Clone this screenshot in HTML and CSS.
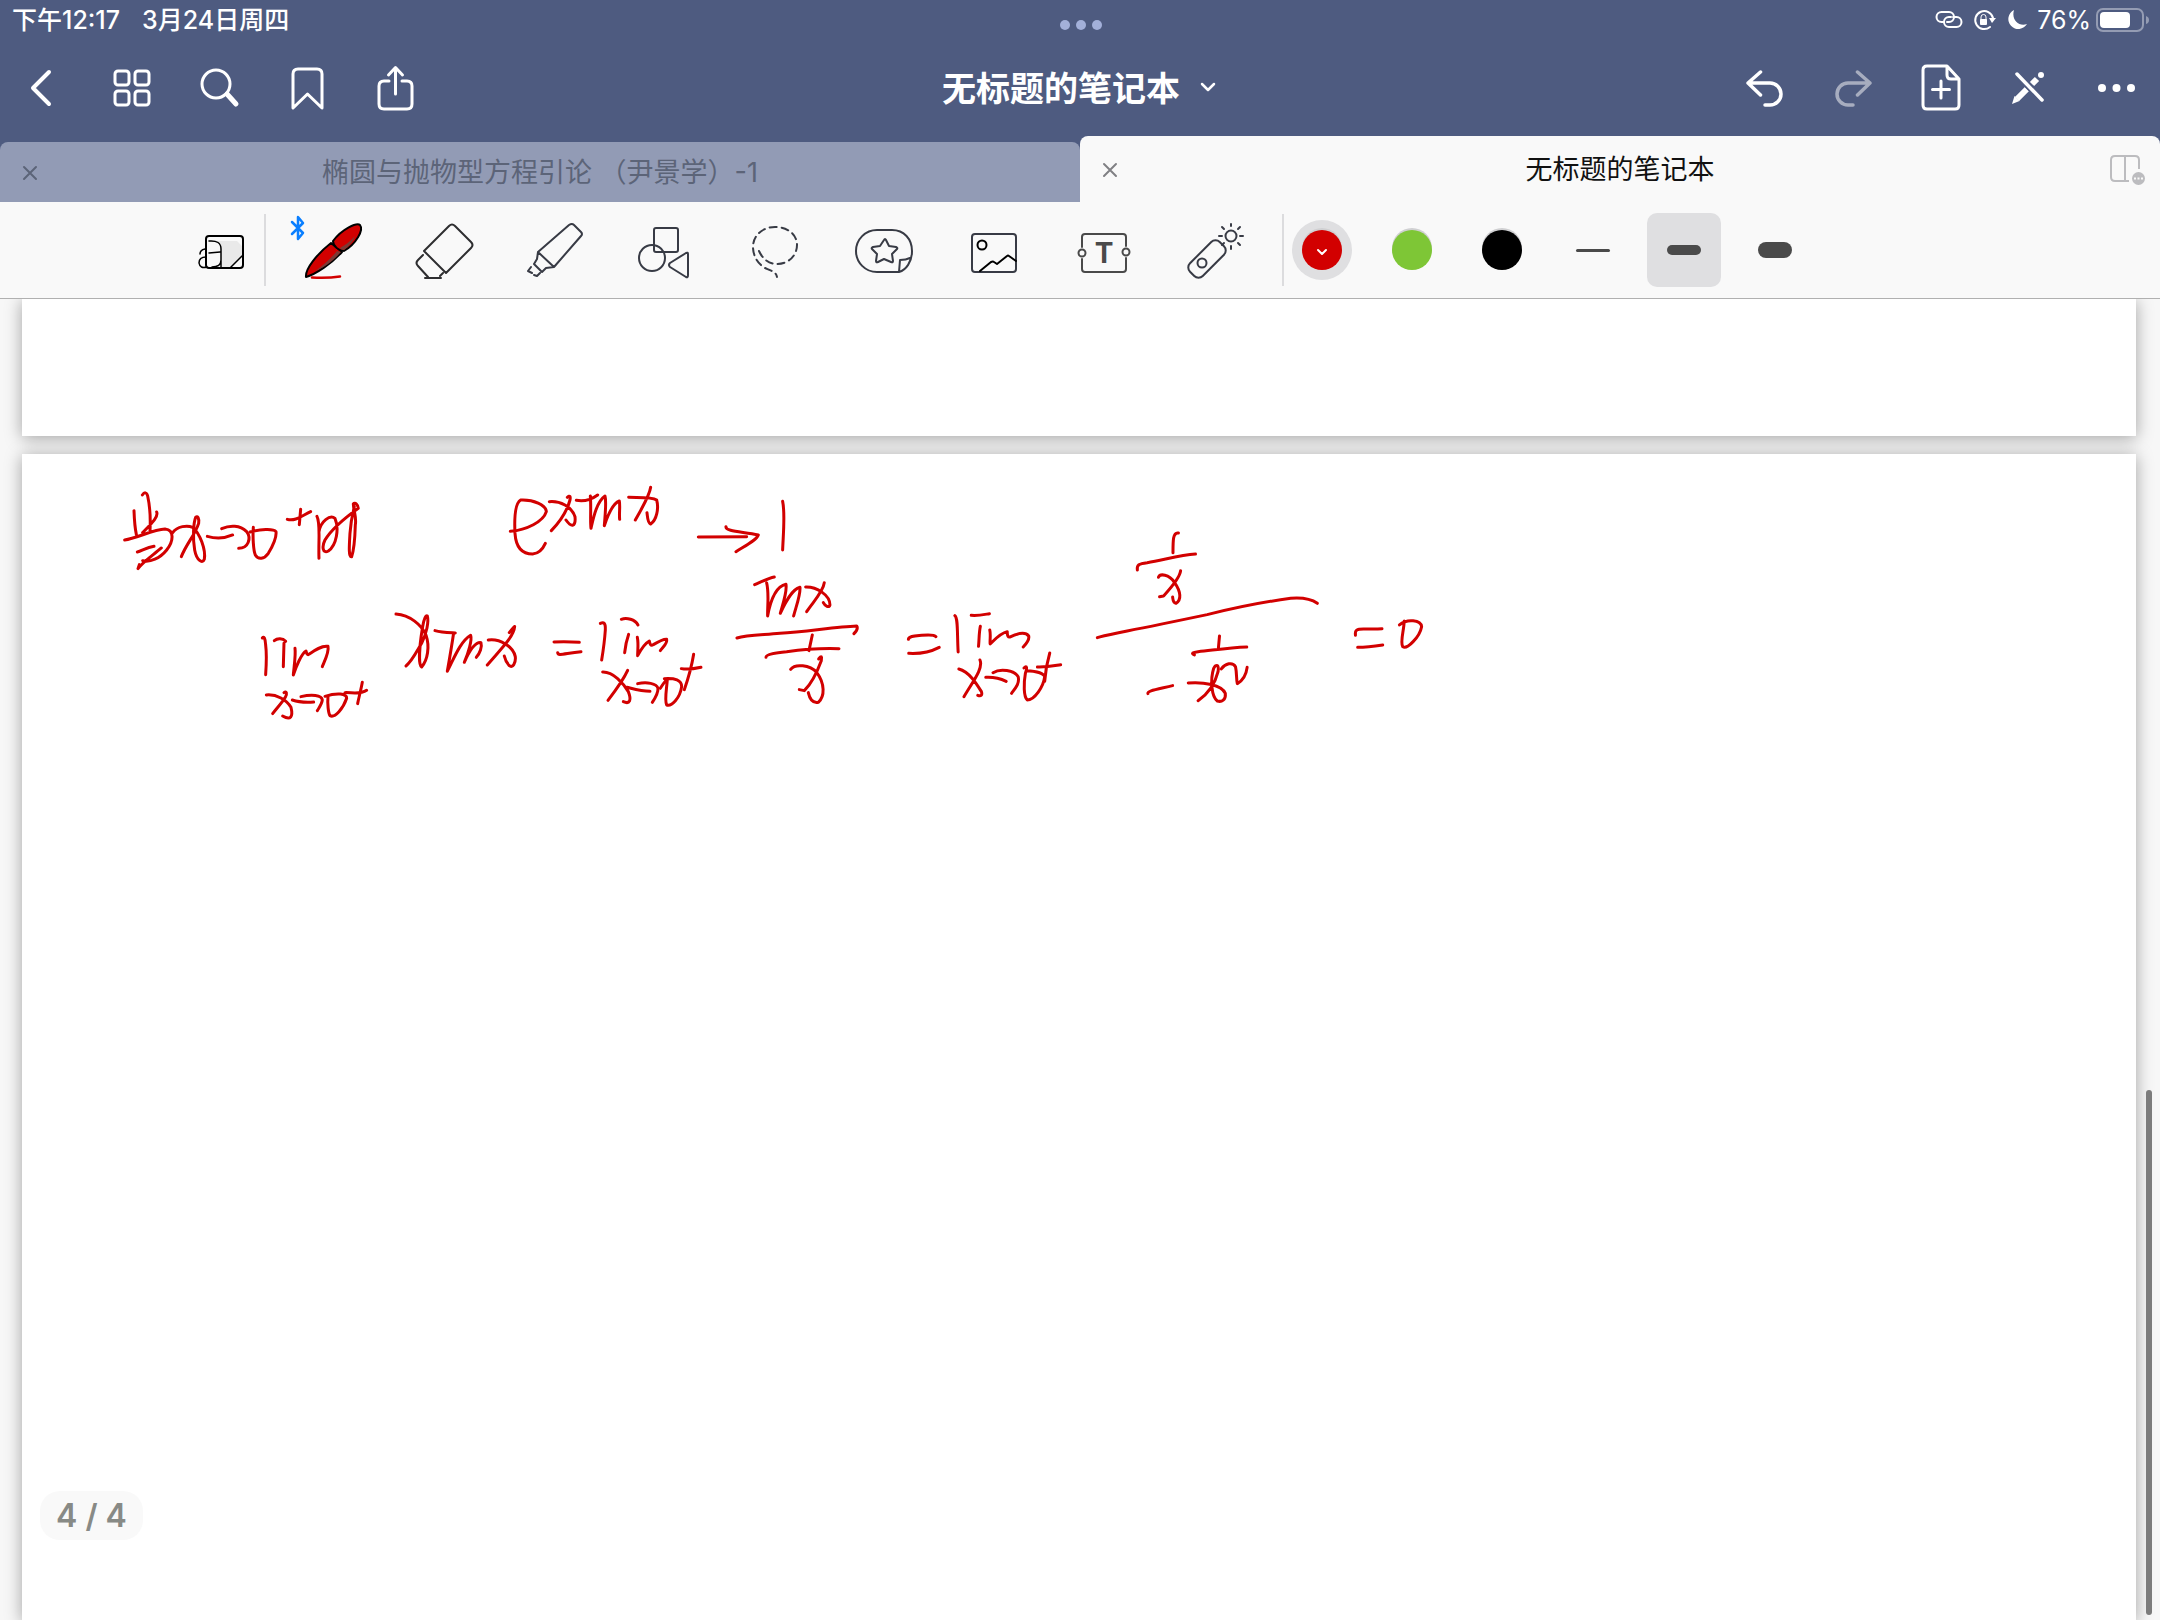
FILE: index.html
```html
<!DOCTYPE html>
<html lang="zh-CN">
<head>
    <meta charset="UTF-8">
    <meta name="viewport" content="width=device-width, initial-scale=1.0">
    <title>无标题的笔记本</title>
    <link rel="stylesheet" href="styles.css">
</head>
<body>
    <header class="header">
        <div class="status">
            <div class="status-left">
                <span>下午12:17</span>
                <span>3月24日周四</span>
            </div>
            <div class="multitask"><i></i><i></i><i></i></div>
            <div class="status-right">
                <svg class="line" width="28" height="24" viewBox="0 0 28 24">
                    <path d="M9 14H6.500a5 5 0 0 1 0-10H14a5 5 0 0 1 0 10h-2M18 9h3.500a5 5 0 0 1 0 10H14a5 5 0 0 1 0-10h2" stroke-width="2"/>
                </svg>
                <svg class="line" width="24" height="24" viewBox="0 0 24 24">
                    <path d="M17 19a9 9 0 1 1 3-9" stroke-width="2"/>
                    <path d="M16 10h7l-4 5z" fill="#fff" stroke="none"/>
                    <rect x="7" y="11" width="7" height="6" rx="1" fill="#fff" stroke="none"/>
                    <path d="M8 12V9a2 2 0 0 1 5 0v3" stroke-width="1"/>
                </svg>
                <svg width="20" height="24" viewBox="0 0 20 24">
                    <path d="M7 2a10 10 0 1 0 13 14C12 19 4 12 7 2z" fill="#fff"/>
                </svg>
                <span class="percent">76%</span>
                <svg width="54" height="24" viewBox="0 0 54 24">
                    <rect x="1" y="1" width="46" height="22" rx="6" fill="none" stroke="#949cb3" stroke-width="2"/>
                    <rect x="4" y="4" width="30" height="16" rx="4" fill="#fff"/>
                    <path d="M50 8q3 1 3 4t-3 4z" fill="#949cb3"/>
                </svg>
            </div>
        </div>

        <nav class="nav">
            <div class="nav-left">
                <button aria-label="返回"><svg class="line" viewBox="0 0 48 48"><path d="M32 8 16 24l16 16" stroke-width="4"/></svg></button>
                <button aria-label="缩略图">
                    <svg class="line" viewBox="0 0 48 48">
                        <rect x="9" y="7" width="14" height="14" rx="3"/><rect x="29" y="7" width="14" height="14" rx="3"/>
                        <rect x="9" y="27" width="14" height="14" rx="3"/><rect x="29" y="27" width="14" height="14" rx="3"/>
                    </svg>
                </button>
                <button aria-label="搜索">
                    <svg class="line" viewBox="0 0 48 48"><circle cx="21" cy="20" r="14"/><path d="m32 30 9 10" stroke-width="5"/></svg>
                </button>
                <button aria-label="书签">
                    <svg class="line" viewBox="0 0 48 48"><path d="M9 44V10q0-5 5-5h19q5 0 5 5v34L23.500 30z"/></svg>
                </button>
                <button aria-label="分享">
                    <svg class="line" viewBox="0 0 48 48"><path d="M16 17h-5q-5 0-5 5v18q0 5 5 5h23q5 0 5-5V22q0-5-5-5h-5M22.500 30V4M15.500 11l7-7.500 7 7.500"/></svg>
                </button>
            </div>
            <button class="title">无标题的笔记本
                <svg class="line" viewBox="0 0 16 16"><path d="m2 6 6 6 6-6" stroke-width="2.500"/></svg>
            </button>
            <div class="nav-right">
                <button aria-label="撤销"><svg class="line" viewBox="0 0 48 48"><path d="M19.500 8 7 19l12.500 12M7 19h22a11 11 0 0 1 0 22h-5" stroke-width="3.500"/></svg></button>
                <button aria-label="重做" disabled><svg class="line" viewBox="0 0 48 48"><path d="M28.500 8 41 19 28.500 31M41 19H19a11 11 0 0 0 0 22h5" stroke-width="3.500"/></svg></button>
                <button aria-label="添加页面">
                    <svg class="line" viewBox="0 0 48 48"><path d="M10 2h20l12 13v26q0 4-4 4H10q-4 0-4-4V6q0-4 4-4zM30 2v9q0 4 4 4h8M24 17v17M15.500 25.500h17"/></svg>
                </button>
                <button aria-label="只读模式">
                    <svg class="line" viewBox="0 0 48 48">
                        <path d="m12 35 10-10M27 20l5-5" stroke-width="6" stroke-linecap="butt"/>
                        <path d="M36 11h0" stroke-width="6"/>
                        <path d="m7 40 2.500-8 5 5z" fill="#fff" stroke="none"/>
                        <path d="m12 10 25 26" stroke="#4e5b80" stroke-width="7"/>
                        <path d="m12 10 25 26" stroke-width="3.500"/>
                    </svg>
                </button>
                <button aria-label="更多"><svg viewBox="0 0 48 48" fill="#fff"><circle cx="9" cy="24" r="4"/><circle cx="23.500" cy="24" r="4"/><circle cx="38" cy="24" r="4"/></svg></button>
            </div>
        </nav>

        <div class="tabs">
            <div class="tab">
                <button class="close" aria-label="关闭"><svg viewBox="0 0 16 16"><path d="m2 2 12 12M14 2 2 14"/></svg></button>
                <span>椭圆与抛物型方程引论 （尹景学）-1</span>
            </div>
            <div class="tab active">
                <button class="close" aria-label="关闭"><svg viewBox="0 0 16 16"><path d="m2 2 12 12M14 2 2 14"/></svg></button>
                <span>无标题的笔记本</span>
                <button class="split" aria-label="分屏">
                    <svg viewBox="0 0 40 40" fill="none" stroke="#bcbcbf" stroke-width="2">
                        <path d="M19 31H5q-4 0-4-4V10q0-4 4-4h20q4 0 4 4v9M15 6v25"/>
                        <circle cx="28.500" cy="28.500" r="6.500" fill="#bcbcbf" stroke="none"/>
                        <path d="M24 28.500h2M27.500 28.500h2M31 28.500h2" stroke="#f9f9f9"/>
                    </svg>
                </button>
            </div>
        </div>
    </header>

    <div class="toolbar">
        <button class="tool zoom-tool" aria-label="缩放窗口">
            <svg viewBox="0 0 60 60" stroke="#000">
                <path d="M22 21h24l5 5v10L39 48H30V30q0-7-8-9z" fill="#e9e9e9" stroke="none"/>
                <rect x="15" y="16" width="37" height="32" rx="3"/>
                <path d="M18 21q12-1 12 8v19M18 33l11-1M30 40q0 7-9 7M51 36 39 48" stroke-width="1.500"/>
                <path d="M14 29q-5 1-5 5M15 37q-7 0-7 6 1 6 8 4" stroke-width="1.500"/>
            </svg>
        </button>
        <span class="divider"></span>
        <div class="tools">
            <button class="tool" aria-label="钢笔">
                <svg viewBox="0 0 60 60" stroke="#000">
                    <path d="M-11 2 0 13l-5 6V-3l5 6-11 11" stroke="#0a7fff" stroke-width="2.500"/>
                    <path d="M3 57C2 49 14 34 28 23l11 9C28 44 13 54 3 57z" fill="#d20000"/>
                    <path d="M12 51C21 45 29 37 34 31l4 1C30 41 21 48 12 51z" fill="#7b3a35" stroke="none"/>
                    <path d="M30 21C39 9 54 2 57 5c4 5-4 19-16 26-5 0-11-5-11-10z" fill="#d20000"/>
                    <path d="M37 28q9-5 15-12-2 7-11 14-3 0-4-2z" fill="#7b3a35" stroke="none"/>
                    <path d="M9 57.500q15 1 28-1" stroke="#d20000" stroke-width="2.500"/>
                </svg>
            </button>
            <button class="tool" aria-label="橡皮擦">
                <svg viewBox="0 0 60 60" stroke="#2e2e30">
                    <path d="M11 31 36 6q3-3 6 0l16 16q3 3 0 6L33 53zM10 35l-5 5q-3 3 0 6l10 11M30 53l-3 3M12 58h16"/>
                </svg>
            </button>
            <button class="tool" aria-label="荧光笔">
                <svg viewBox="0 0 60 60">
                    <path d="M15 32 46 5q3-2 5 0l7 7q2 2 0 4L31 47zM15 32l-1 7-3 5 8 8 4-4 8-1M8 47l-3 4 4 2M11 55l3 1 3-3"/>
                </svg>
            </button>
            <button class="tool" aria-label="形状">
                <svg viewBox="0 0 60 60">
                    <rect x="21" y="8" width="24" height="24" rx="2"/><circle cx="19" cy="38" r="13"/>
                    <path d="m37 43 16-10q2-1 2 1v21q0 3-2 2L37 47q-2-2 0-4z"/>
                </svg>
            </button>
            <button class="tool" aria-label="套索">
                <svg viewBox="0 0 60 60">
                    <path d="M16 31c4 9 11 13 18 13 12 0 20-9 20-19C54 14 44 7 32 7 19 7 10 16 10 27c0 9 5 17 12 21 7 3 11 4 12 9" stroke-dasharray="7 5"/>
                </svg>
            </button>
            <button class="tool" aria-label="贴纸">
                <svg viewBox="0 0 60 60">
                    <path d="M46 52H24a21 21 0 0 1 0-42h15c12 0 20 9 20 21 0 11-6 19-13 21zl1-12q6 0 10-2"/>
                    <path d="M31 20q1-2 2 0l3 6 7 1q2 1 1 2l-5 5 1 7q0 2-2 1l-7-3-6 3q-2 1-2-1l1-7-5-5q-1-1 1-2l7-1z"/>
                </svg>
            </button>
            <button class="tool" aria-label="图片">
                <svg viewBox="0 0 60 60">
                    <rect x="9" y="14" width="44" height="38" rx="3"/>
                    <g stroke="#000"><circle cx="19" cy="25" r="4.500"/><path d="m17 51 11-9q2-1 3 0l3 2 10-8q1-1 2 0l7 5"/></g>
                </svg>
            </button>
            <button class="tool" aria-label="文本">
                <svg viewBox="0 0 60 60" stroke="#4a4a4a">
                    <path d="M9 27V17q0-3 3-3h38q3 0 3 3v9M9 39v10q0 3 3 3h38q3 0 3-3V38"/>
                    <circle cx="9" cy="33" r="3.500"/><circle cx="53" cy="32" r="3.500"/>
                    <text x="31" y="43" text-anchor="middle">T</text>
                </svg>
            </button>
            <button class="tool" aria-label="激光笔">
                <svg viewBox="0 0 60 60">
                    <rect x="15" y="18" width="18" height="42" rx="6" transform="rotate(45 24 39)"/>
                    <circle cx="19" cy="43" r="4.500"/><circle cx="48" cy="16" r="5.500"/>
                    <path d="M48 4v2M48 26v3M36 16h3M57 16h3M39 7l2 2M57 7l-2 2M57 25l-2-2M39 25l2-2"/>
                </svg>
            </button>
        </div>
        <span class="divider"></span>
        <div class="colors">
            <button class="color red selected" aria-label="红色"><i><svg class="line" viewBox="0 0 16 16"><path d="m4 8 4 4 4-4" stroke-width="2"/></svg></i></button>
            <button class="color green" aria-label="绿色"><i></i></button>
            <button class="color black" aria-label="黑色"><i></i></button>
        </div>
        <div class="sizes">
            <button class="size thin" aria-label="细"><i></i></button>
            <button class="size medium selected" aria-label="中"><i></i></button>
            <button class="size thick" aria-label="粗"><i></i></button>
        </div>
    </div>

    <main class="canvas">
        <section class="page previous"></section>
        <section class="page current">
            <!-- pen strokes, one group per written block -->
            <svg class="ink" viewBox="0 0 1350 270" role="img" aria-label="当 x→0+ 时 e^(x ln x) → 1">
                <g transform="scale(.3333)">
                    <path d="M102 122C103 150 105 175 109 193M127 75C133 66 140 66 143 78C150 110 152 145 150 182M170 126C176 140 155 160 128 188M74 210C110 205 160 178 195 177C225 180 220 215 200 240C180 265 150 278 128 272M112 246C125 243 140 232 162 229M184 234C160 255 130 275 114 296L118 284"/>
                    <path d="M218 188C232 168 262 165 278 172C300 190 318 240 313 268C308 282 290 272 284 240C278 205 280 160 287 142C293 136 298 145 296 160C285 195 260 220 244 260"/>
                    <path d="M322 199C345 206 375 205 398 195M365 176C390 165 420 165 440 185C455 205 445 235 416 235"/>
                    <path d="M460 172C458 200 460 240 466 255C475 270 492 268 505 250C520 225 530 200 528 185C520 175 480 178 450 186M562 148C585 155 605 138 632 125M602 118L598 164"/>
                    <path d="M651 139C662 160 655 210 657 265M657 185C662 155 690 132 705 145C718 175 710 225 685 243C668 252 665 230 675 210C700 170 740 140 775 115C775 105 765 95 760 102C762 130 770 140 766 165C765 200 762 240 755 260C745 262 748 225 750 190C752 160 758 130 763 110"/>
                    <path d="M487 504C492 498 496 505 497 525C501 555 499 585 497 614M523 512C532 504 548 504 557 514M552 520L550 590M585 535C588 555 582 590 580 615C588 590 605 550 618 543C620 550 622 558 628 552C645 540 665 526 684 529C688 545 675 570 667 590"/>
                    <path d="M499 675C530 672 560 690 573 712C580 740 572 752 548 738M552 668C560 662 562 672 556 682C545 700 530 715 518 731M577 690C600 698 625 697 641 696M603 680C635 673 665 675 667 690C666 702 658 712 652 722"/>
                    <path d="M684 680C682 700 685 730 690 737C705 745 730 715 740 685C742 670 710 668 675 679M735 668C755 667 780 675 800 661M787 637C783 660 777 680 773 701"/>
                    <path d="M888 432C930 435 965 465 978 495C990 530 983 570 965 591C955 585 958 530 968 470C972 445 978 435 982 438C987 455 980 490 965 520C950 545 935 575 918 588"/>
                    <path d="M1005 482C1025 488 1045 488 1066 489M1061 489C1055 530 1048 570 1042 604C1060 570 1080 515 1112 496C1117 510 1105 550 1093 577C1105 550 1125 515 1143 518C1147 530 1140 550 1129 562"/>
                    <path d="M1165 510C1200 505 1240 530 1246 560C1248 580 1238 595 1228 587C1220 578 1215 568 1213 558M1228 488C1238 475 1245 468 1244 470C1242 500 1200 540 1162 585"/>
                </g>
                <g transform="translate(380) scale(.3333)">
                    <path d="M91 184C140 180 190 155 199 125C198 105 160 88 122 90C105 100 103 150 105 190C108 235 130 252 158 252C178 250 188 238 196 220"/>
                    <path d="M208 95C240 92 275 110 285 140C288 170 275 174 258 150M262 82C270 75 272 80 270 90C262 120 240 155 214 182"/>
                    <path d="M289 91C310 95 335 88 353 75M331 78C334 110 330 150 333 175C340 145 350 95 375 78C380 95 375 140 373 167C382 140 398 100 418 93C421 110 417 130 419 148"/>
                    <path d="M446 82C480 83 515 80 530 90C537 115 530 150 512 162C502 158 503 140 501 128M512 52C508 80 485 115 466 150"/>
                    <path d="M655 201L800 200M738 170C735 185 790 185 835 195C830 210 800 225 768 245M908 94C916 130 910 190 908 240"/>
                    <path d="M824 344C845 335 865 325 883 321M860 339C868 370 862 410 863 438C870 400 885 350 918 343C922 365 908 405 901 430C915 400 935 358 960 352C962 375 948 410 941 438"/>
                    <path d="M977 351C1010 350 1050 375 1050 405C1048 415 1035 408 1030 398M1033 338C1030 365 1000 395 980 425"/>
                    <path d="M771 504C800 495 850 495 900 490C980 485 1070 470 1130 468C1135 475 1130 483 1122 491M997 495L987 542M858 562C858 552 890 548 920 545C970 538 1020 534 1077 536"/>
                    <path d="M932 598C945 580 990 585 1010 607C1035 640 1035 680 1015 697C1000 700 990 690 985 668M1016 567C1025 555 1026 560 1024 572C1010 610 990 645 973 662L958 659"/>
                    <path d="M222 516C245 515 270 515 298 517M233 548C235 558 245 552 303 545"/>
                    <path d="M361 460C372 455 377 460 376 480C374 510 370 540 365 570M424 448C440 442 465 448 474 465M446 493C440 510 436 530 434 548M472 502C476 520 473 540 473 557C482 540 495 520 508 513C510 522 512 530 520 524C535 515 550 507 560 508C563 520 550 530 541 542"/>
                    <path d="M368 606C400 605 430 640 445 665C455 690 450 704 430 695M443 601C430 630 400 670 384 691M441 652C465 658 485 664 510 664M473 641C500 635 530 640 534 655C535 670 525 685 517 697"/>
                    <path d="M541 655C550 640 553 635 562 628C560 660 553 690 560 705C575 710 600 685 605 650C605 630 585 624 553 626M604 596C625 600 645 596 663 592M641 553C635 590 625 625 613 659"/>
                </g>
                <g transform="translate(780 40) scale(.3635 .3333)">
                    <path d="M78 388C80 378 95 378 115 376C135 374 150 375 154 380M79 430C110 432 140 425 163 412"/>
                    <path d="M206 317C215 325 212 370 215 426M251 316C270 318 285 314 301 311M276 349C272 370 273 390 271 409M302 360C305 375 302 390 303 402C315 390 330 370 350 365C350 378 352 384 360 380C380 370 400 365 409 378C412 390 402 402 394 411"/>
                    <path d="M217 477C245 485 265 520 279 545C282 555 278 560 269 556M275 450C285 475 255 515 231 560M291 502C310 501 330 505 347 514M311 488C330 475 370 480 380 500C385 520 372 535 362 550"/>
                    <path d="M396 474C405 465 405 475 400 490C395 520 395 560 405 570C425 570 450 530 453 500C450 490 430 483 403 482M433 471C460 472 475 468 497 464M467 429C460 455 455 485 453 514"/>
                    <path d="M821 69C806 66 806 90 806 128M708 180C706 165 712 161 735 158C780 150 825 135 868 132"/>
                    <path d="M766 202C770 190 795 192 810 217C828 245 830 270 814 280C806 278 806 270 805 261M827 182C825 205 795 240 780 258L769 260"/>
                    <path d="M598 383C610 378 640 372 680 363C760 346 830 330 900 314C980 292 1060 275 1130 265C1165 262 1185 266 1203 280"/>
                    <path d="M934 378L931 414M865 435C855 430 860 427 875 425C920 420 960 413 1009 411M737 551C735 543 755 540 805 527"/>
                    <path d="M848 519C890 515 940 525 950 550C952 570 940 577 928 573C912 560 908 510 918 475C925 460 933 465 930 485C922 520 905 550 875 572M939 477C950 460 970 455 978 470C982 490 980 510 983 521C1000 510 1008 490 1010 472"/>
                    <path d="M1308 376C1306 360 1312 357 1330 357C1350 357 1365 358 1381 356M1314 412C1340 412 1365 408 1383 405M1442 333C1442 360 1430 395 1438 410C1450 420 1485 380 1490 350C1488 330 1450 325 1429 345"/>
                </g>
            </svg>
        </section>
        <div class="page-number">4 / 4</div>
        <div class="scrollbar"></div>
    </main>
</body>
</html>
```
FILE: styles.css
```css
* {
    box-sizing: border-box;
}

body {
    display: flex;
    flex-direction: column;
    height: 100vh;
    margin: 0;
    overflow: hidden;
    font-family: Inter, "Noto Sans CJK SC", sans-serif;
    background-color: #f7f7f7;
}

button {
    display: flex;
    align-items: center;
    justify-content: center;
    padding: 0;
    border: 0;
    background: none;
    font: inherit;
    color: inherit;
}

svg {
    display: block;
    flex-shrink: 0;
}

.line {
    fill: none;
    stroke: #fff;
    stroke-width: 3;
    stroke-linecap: round;
    stroke-linejoin: round;
}

/* header */
.header {
    color: #fff;
    background-color: #4e5b80;
}

.status {
    display: grid;
    grid-template-columns: 1fr auto 1fr;
    height: 40px;
    padding: 0 10px 0 12px;
    font-size: 25px;
    font-weight: 500;
    line-height: 40px;
}

.status-left {
    display: flex;
    gap: 22px;
}

.status-right {
    display: flex;
    align-items: center;
    justify-content: flex-end;
    gap: 10px;
}

.percent {
    margin-right: -5px;
    font-weight: 400;
}

.multitask {
    display: flex;
    gap: 6px;
    padding-top: 20px;
}

.multitask i {
    width: 10px;
    height: 10px;
    border-radius: 50%;
    background-color: #a3b0d9;
}

.nav {
    display: grid;
    grid-template-columns: 1fr auto 1fr;
    align-items: center;
    height: 96px;
    padding: 0 19px 0 17px;
}

.nav-left, .nav-right {
    display: flex;
    gap: 41px;
}

.nav-right {
    justify-content: flex-end;
    gap: 40px;
}

.nav-left svg, .nav-right svg {
    width: 48px;
    height: 48px;
}

.nav button:disabled {
    opacity: 0.5;
}

.title {
    gap: 20px;
    padding-bottom: 4px;
    font-size: 34px;
    font-weight: 600;
}

.title svg {
    width: 16px;
    height: 16px;
}

/* tabs */
.tabs {
    display: flex;
    align-items: flex-end;
}

.tab {
    display: grid;
    grid-template-columns: 60px 1fr 60px;
    align-items: center;
    flex: 1;
    height: 60px;
    padding-top: 2px;
    border-radius: 8px 8px 0 0;
    font-size: 27px;
    line-height: 36px;
    text-align: center;
    color: #5c6478;
    background-color: #929bb5;
}

.tab.active {
    height: 66px;
    color: #111;
    background-color: #f9f9f9;
}

.close svg {
    width: 16px;
    height: 16px;
    stroke: #5c6478;
    stroke-width: 2;
    stroke-linecap: round;
}

.active .close svg {
    stroke: #808084;
}

.split svg {
    width: 40px;
    height: 40px;
}

/* toolbar */
.toolbar {
    display: flex;
    align-items: center;
    height: 97px;
    padding-left: 178px;
    border-bottom: 1px solid #b0b0b0;
    background-color: #f9f9f9;
}

.tool {
    width: 110px;
    height: 96px;
}

.zoom-tool {
    width: 86px;
}

.tool svg {
    width: 60px;
    height: 60px;
    overflow: visible;
    fill: none;
    stroke-width: 2;
    stroke-linecap: round;
    stroke-linejoin: round;
}

.tool svg:not([stroke]) {
    stroke: #383b45;
}

.tool text {
    font-size: 28px;
    font-weight: 700;
    fill: #4a4a4a;
    stroke: none;
}

.divider {
    width: 2px;
    height: 72px;
    background-color: #dcdcde;
}

.tools {
    display: flex;
    margin: 0 14px 0 12px;
}

.colors {
    display: flex;
    gap: 30px;
    margin: 0 24px 0 8px;
}

.color {
    width: 60px;
    height: 60px;
    border-radius: 50%;
}

.color i {
    display: flex;
    align-items: center;
    justify-content: center;
    width: 40px;
    height: 40px;
    border-radius: 50%;
    box-shadow: 0 -2px 0 #d0d0d2;
}

.color svg {
    width: 16px;
    height: 16px;
}

.red i {
    background-color: #d20000;
}

.green i {
    background-color: #7ec636;
}

.black i {
    background-color: #000;
}

.sizes {
    display: flex;
    gap: 17px;
}

.size {
    width: 74px;
    height: 74px;
    border-radius: 10px;
}

.selected {
    background-color: #dfdfe1;
}

.size i {
    width: 34px;
    border-radius: 8px;
    background-color: #4a4a4a;
}

.thin i {
    height: 3px;
}

.medium i {
    height: 10px;
}

.thick i {
    height: 16px;
}

/* notebook pages */
.canvas {
    position: relative;
    display: flex;
    flex: 1;
    flex-direction: column;
    gap: 18px;
    padding: 0 24px 0 22px;
    overflow: hidden;
}

.page {
    background-color: #fff;
    box-shadow: 0 2px 16px rgba(0, 0, 0, 0.35);
}

.previous {
    height: 137px;
}

.current {
    flex: 1;
    padding: 16px 78px;
}

.ink {
    width: 1350px;
    height: 270px;
    fill: none;
    stroke: #d20000;
    stroke-width: 3px;
    stroke-linecap: round;
    stroke-linejoin: round;
}

.ink path {
    vector-effect: non-scaling-stroke;
}

.page-number {
    position: absolute;
    left: 40px;
    bottom: 80px;
    padding: 0 16px;
    border-radius: 20px;
    font-size: 32px;
    font-weight: 600;
    line-height: 49px;
    color: #888a86;
    background-color: #f9f9f9;
}

.scrollbar {
    position: absolute;
    right: 8px;
    bottom: 5px;
    width: 6px;
    height: 525px;
    border-radius: 3px;
    background-color: #7c7c7c;
}
```
